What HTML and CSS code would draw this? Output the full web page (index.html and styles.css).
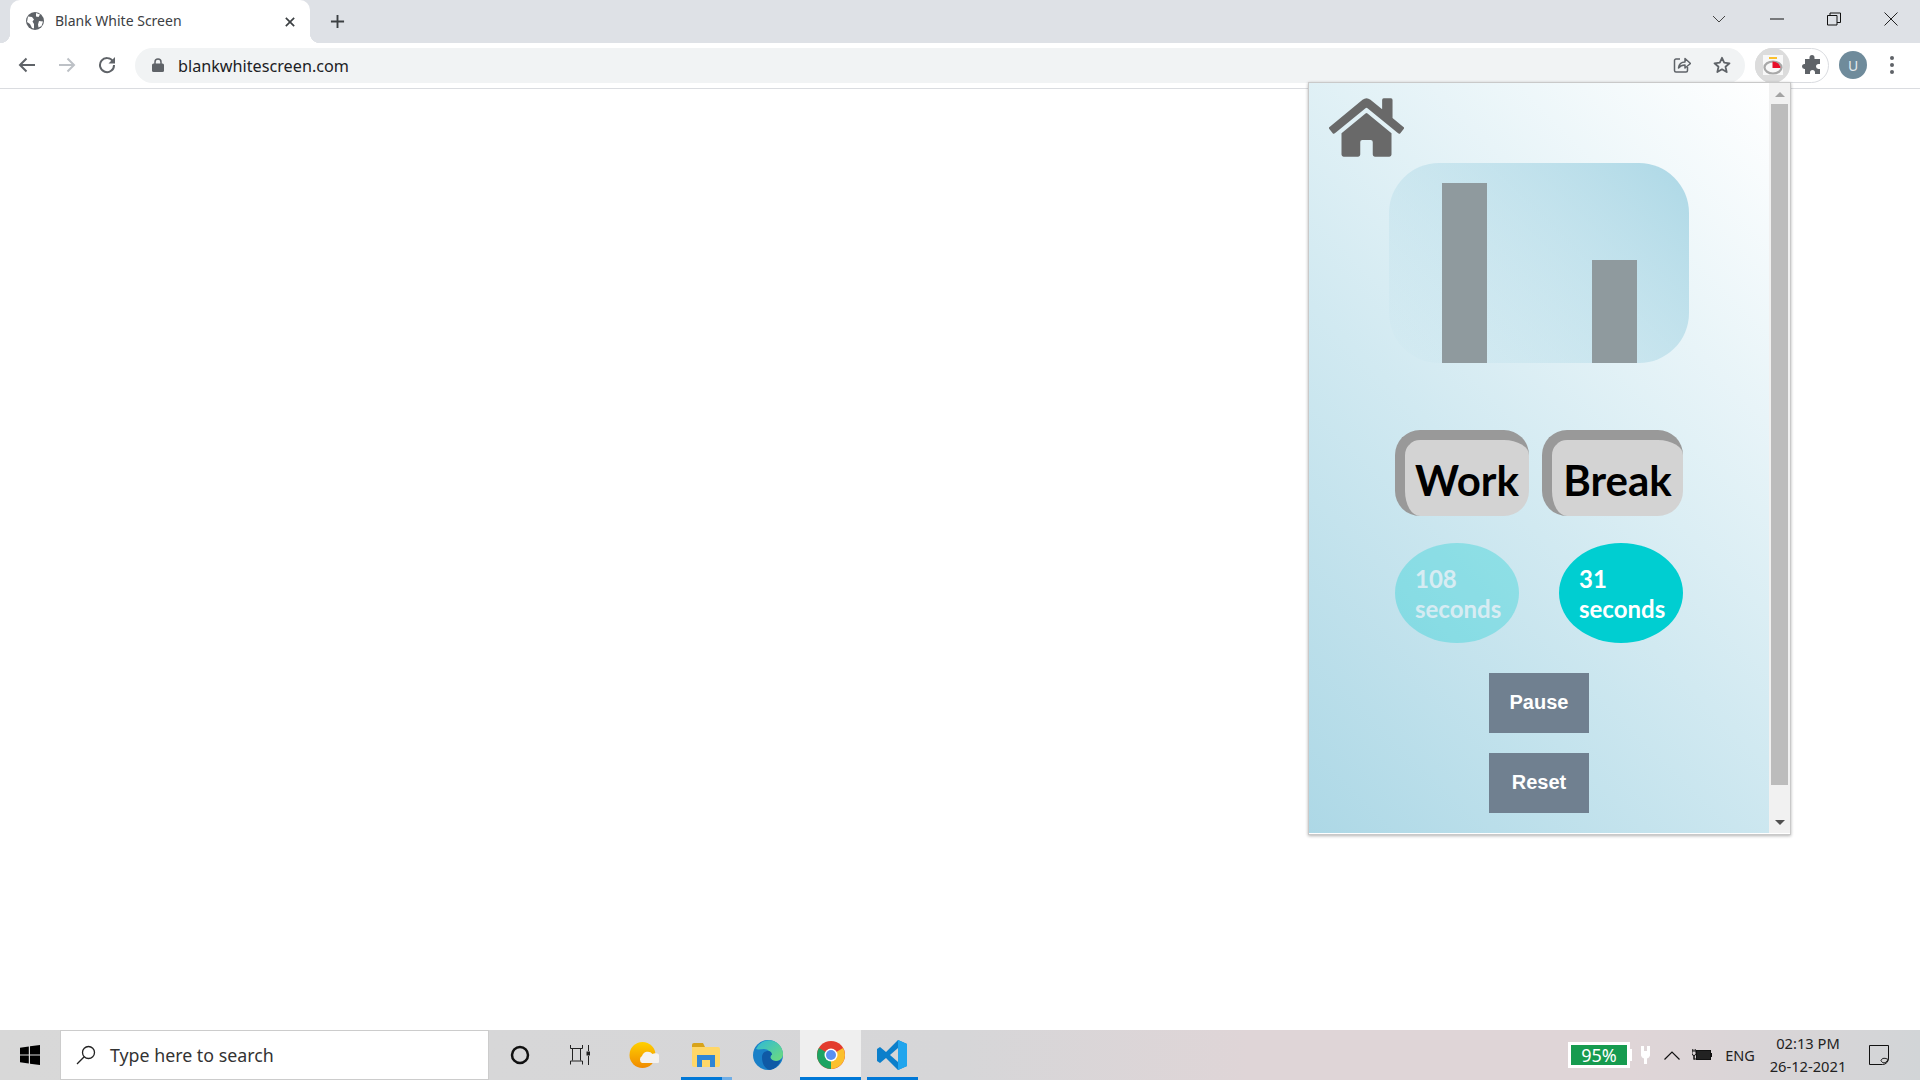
FILE: index.html
```html
<!DOCTYPE html>
<html>
<head>
    <title>Blank White Screen</title>
    <link rel="stylesheet" href="styles.css">
</head>
<body>
    <div class="tabstrip">
        <div class="tab">
            <svg class="favicon" viewBox="0 0 18 18"><circle cx="9" cy="9" r="9" fill="#5f6368"/><path d="M2 4.500 6 5l2 2.500-1.500 2L8 12v4.500L6 16l-2-4-3-2zM10 1l4 1.500L12.500 5 10 4.500zM13 9l4 .5-1.500 4.500-3 1.500-.5-3z" fill="#fff"/></svg>
            <span class="tab-title">Blank White Screen</span>
            <svg class="tab-close" viewBox="0 0 12 12"><path d="M1 1l10 10M11 1 1 11" stroke="#3c4043" stroke-width="2"/></svg>
        </div>
        <svg class="new-tab" viewBox="0 0 16 16"><path d="M8 1v14M1 8h14" stroke="#3c4043" stroke-width="2"/></svg>
        <div class="window-controls">
            <div class="win-btn chevron"><svg width="14" height="8" viewBox="0 0 14 8"><path d="M1 1l6 6 6-6" fill="none" stroke="#444" stroke-width="1"/></svg></div>
            <div class="win-btn"><svg width="14" height="2" viewBox="0 0 14 2"><path d="M0 1h14" stroke="#111" stroke-width="1"/></svg></div>
            <div class="win-btn"><svg width="14" height="14" viewBox="0 0 14 14"><path d="M.5 3.500h9.500v9.500H.5zM3 3.500V1h10.500v9.500H10" fill="none" stroke="#111" stroke-width="1"/></svg></div>
            <div class="win-btn"><svg width="14" height="14" viewBox="0 0 14 14"><path d="M.5.5l13 13M13.500.5l-13 13" stroke="#222" stroke-width="1"/></svg></div>
        </div>
    </div>

    <div class="toolbar">
        <div class="nav-btn"><svg width="18" height="16" viewBox="0 0 18 16"><path d="M17 8H2M8.500 1.500 2 8l6.500 6.500" fill="none" stroke="#5f6368" stroke-width="2"/></svg></div>
        <div class="nav-btn"><svg width="18" height="16" viewBox="0 0 18 16"><path d="M1 8h15M9.500 1.500 16 8l-6.500 6.500" fill="none" stroke="#bdc1c6" stroke-width="2"/></svg></div>
        <div class="nav-btn"><svg width="18" height="18" viewBox="0 0 18 18"><path d="M15 5.500A7 7 0 1 0 16 9" fill="none" stroke="#5f6368" stroke-width="2"/><path d="M17 1v6.500h-6.500z" fill="#5f6368"/></svg></div>
        <div class="omnibox">
            <svg class="lock" viewBox="0 0 12 14"><path d="M3 6V4a3 3 0 0 1 6 0v2" fill="none" stroke="#5f6368" stroke-width="1.500"/><rect y="5.500" width="12" height="8.500" rx="1.500" fill="#5f6368"/></svg>
            <span class="url">blankwhitescreen.com</span>
            <svg class="omni-icon share" viewBox="0 0 18 18"><path d="M7 3H3a1.500 1.500 0 0 0-1.500 1.500v10A1.500 1.500 0 0 0 3 16h10a1.500 1.500 0 0 0 1.500-1.500V11" fill="none" stroke="#5f6368" stroke-width="1.500"/><path d="M5.500 12c.5-4 3-6 6.500-6V2.500L17.500 7.500 12 12V9c-3 0-5 1-6.500 3z" fill="none" stroke="#5f6368" stroke-width="1.500" stroke-linejoin="round"/></svg>
            <svg class="omni-icon" viewBox="0 0 18 18"><path d="M9 1.800l2.200 4.900 5.300.6-4 3.500 1.200 5.300L9 13.300l-4.700 2.800 1.200-5.300-4-3.500 5.300-.6z" fill="none" stroke="#5f6368" stroke-width="1.800" stroke-linejoin="round"/></svg>
        </div>
        <div class="ext-pill">
            <div class="ext-active">
                <svg width="20" height="20" viewBox="0 0 20 20"><rect width="20" height="20" fill="#f8f8f8"/><rect x="6" y="2" width="8" height="2" fill="#fbc02d"/><ellipse cx="10" cy="12.500" rx="8.500" ry="6" fill="#f8f8f8" stroke="#a8a8a8" stroke-width="2.200"/><path d="M9.500 13V6.500a8 7 0 0 1 8 6.500z" fill="#e8102a"/></svg>
            </div>
            <svg class="puzzle" viewBox="0 0 20 20"><path d="M7.500 2.500a2.500 2.500 0 0 1 5 0V4H18v5h-1.500a2.500 2.500 0 0 0 0 5H18v5h-5v-1.500a2.500 2.500 0 0 0-5 0V19H3v-5h-.5a2.500 2.500 0 0 1 0-5H3V4h4.500z" fill="#5f6368"/></svg>
        </div>
        <div class="avatar">U</div>
        <div class="menu-dots"><span></span><span></span><span></span></div>
    </div>

    <div class="page">
        <div class="popup">
            <div class="popup-content">
                <svg class="home-icon" viewBox="0 32 576 448"><path d="M280.370 148.260L96 300.110V464a16 16 0 0 0 16 16l112.060-.29a16 16 0 0 0 15.920-16V368a16 16 0 0 1 16-16h64a16 16 0 0 1 16 16v95.640a16 16 0 0 0 16 16.050L464 480a16 16 0 0 0 16-16V300L295.670 148.260a12.190 12.190 0 0 0-15.300 0zM571.600 251.470L488 182.560V44.050a12 12 0 0 0-12-12h-56a12 12 0 0 0-12 12v72.610L318.470 43a48 48 0 0 0-61 0L4.340 251.470a12 12 0 0 0-1.600 16.900l25.500 31A12 12 0 0 0 45.150 301l235.220-193.740a12.190 12.190 0 0 1 15.300 0L530.900 301a12 12 0 0 0 16.900-1.600l25.500-31a12 12 0 0 0-1.700-16.930z"/></svg>
                <div class="chart">
                    <div class="bar" style="height: 180px"></div>
                    <div class="bar" style="height: 103px"></div>
                </div>
                <div class="modes">
                    <button class="mode mode-work">Work</button>
                    <button class="mode mode-break">Break</button>
                </div>
                <div class="timers">
                    <div class="timer timer-dim">108<br>seconds</div>
                    <div class="timer">31<br>seconds</div>
                </div>
                <button class="action">Pause</button>
                <button class="action">Reset</button>
            </div>
            <div class="scrollbar">
                <div class="arrow arrow-up"></div>
                <div class="thumb"></div>
                <div class="arrow arrow-down"></div>
            </div>
        </div>
    </div>

    <div class="taskbar">
        <div class="start">
            <svg width="20" height="20" viewBox="0 0 20 20"><path d="M0 2.800l8.800-1.300v8H0zM10 1.300 20 0v9.500H10zM0 10.500h8.800v8L0 17.200zM10 10.500h10V20l-10-1.300z" fill="#000"/></svg>
        </div>
        <div class="search">
            <svg width="20" height="20" viewBox="0 0 20 20"><circle cx="12.500" cy="7.500" r="6" fill="none" stroke="#222" stroke-width="1.300"/><path d="M8.200 11.800 1 19" stroke="#222" stroke-width="1.300"/></svg>
            <span class="search-text">Type here to search</span>
        </div>
        <div class="task-item">
            <svg width="20" height="20" viewBox="0 0 20 20"><circle cx="10" cy="10" r="8" fill="none" stroke="#111" stroke-width="2.500"/></svg>
        </div>
        <div class="task-item task-view">
            <svg width="20" height="20" viewBox="0 0 20 20"><path d="M.5 0v3.500h12V0M.5 19.500V16h12v3.500" fill="none" stroke="#222" stroke-width="1"/><path d="M2.500 3.500v12M10.500 3.500v12" stroke="#222" stroke-width="1"/><path d="M18.500 0v6M18.500 11v9" stroke="#222" stroke-width="1"/><rect x="16.500" y="6.500" width="4" height="4" fill="#222"/></svg>
        </div>
        <div class="task-item">
            <svg width="30" height="28" viewBox="0 0 30 28"><defs><linearGradient id="sun" x1="0" y1="0" x2="0" y2="1"><stop offset="0" stop-color="#ffd000"/><stop offset="1" stop-color="#f08a00"/></linearGradient></defs><circle cx="13.500" cy="14" r="13" fill="url(#sun)"/><path d="M13 22a4 4 0 0 1 0-7 6 6 0 0 1 10.500-2 5 5 0 0 1 5.500 9z" fill="#f4f2f0"/></svg>
        </div>
        <div class="task-item running">
            <svg width="28" height="24" viewBox="0 0 28 24"><path d="M0 2a2 2 0 0 1 2-2h9l2 4H0z" fill="#d8a31a"/><path d="M0 4h26a2 2 0 0 1 2 2v16a2 2 0 0 1-2 2H2a2 2 0 0 1-2-2z" fill="#ffd768"/><path d="M5 12h18v12h-5v-7h-8v7H5z" fill="#2f86d6"/></svg>
            <span class="underline underline-split"></span>
        </div>
        <div class="task-item">
            <svg width="30" height="30" viewBox="0 0 30 30"><defs><linearGradient id="edge1" x1="0" y1="0" x2="1" y2="1"><stop offset="0" stop-color="#2fb8d8"/><stop offset="1" stop-color="#6fdc7a"/></linearGradient></defs><circle cx="15" cy="15" r="15" fill="#1a80c8"/><path d="M3 9A14 14 0 0 1 30 14c0 4-3 7-7 7-4 0-6-1.500-6-3 0-1 1-1 1-3 0-3-3-6-7-6-3 0-6 1-8 0z" fill="url(#edge1)"/><path d="M9 17c0-4 3-6 6-6s4 2 4 4c-3 0-2 6 4 6 2 0 4-.5 5-1.500A15 15 0 0 1 17 30C12 29 9 24 9 17z" fill="#0f5aa6"/></svg>
        </div>
        <div class="task-item active running">
            <svg width="28" height="28" viewBox="0 0 28 28"><circle cx="14" cy="14" r="14" fill="#e33b2e"/><path d="M14 14 26.100 7A14 14 0 0 1 14 28z" fill="#fbc02d"/><path d="M14 14 14 28A14 14 0 0 1 1.900 7z" fill="#1da462"/><circle cx="14" cy="14" r="6.500" fill="#fff"/><circle cx="14" cy="14" r="5" fill="#5a8ff0"/></svg>
            <span class="underline underline-full"></span>
        </div>
        <div class="task-item running">
            <svg width="30" height="30" viewBox="0 0 30 30"><path d="M21 0 30 4v22l-9 4L9 18l-6 5-3-2v-12l3-2 6 5z" fill="#0b7fcb"/><path d="M21 0 30 4v22l-9 4z" fill="#21a5ed"/><path d="M21 8v14l-8-7z" fill="#d6d6d6"/></svg>
            <span class="underline underline-code"></span>
        </div>

        <div class="tray">
            <div class="battery-pill"><span class="battery-fill">95%</span></div>
            <div class="battery-nub"></div>
            <div class="tray-cell plug">
                <svg width="11" height="18" viewBox="0 0 11 18"><path d="M1 0h3v5h3V0h3v9.500A4 4 0 0 1 7 12.500V18H4v-5.500A4 4 0 0 1 1 9.500z" fill="#fff"/></svg>
            </div>
            <div class="tray-cell chevron-up">
                <svg width="16" height="9" viewBox="0 0 16 9"><path d="M.5 8.500 8 1l7.500 7.500" fill="none" stroke="#111" stroke-width="1.200"/></svg>
            </div>
            <div class="tray-cell battery">
                <svg width="20" height="12" viewBox="0 0 20 12"><path d="M0 2v2.500a2 2 0 0 0 4 0V2zM2 6v5" fill="none" stroke="#111"/><path d="M.8 0v2M3.200 0v2M2 7v3h3" fill="none" stroke="#111"/><rect x="4.500" y="1.500" width="14" height="9" fill="#222" stroke="#111"/><rect x="19" y="4" width="1" height="4" fill="#111"/></svg>
            </div>
            <div class="tray-cell lang">ENG</div>
            <div class="tray-cell clock"><span>02:13 PM</span><span>26-12-2021</span></div>
            <div class="tray-cell notif">
                <svg width="20" height="20" viewBox="0 0 20 20"><path d="M.5.500h19V13a6 6 0 0 1-6 6.500H.5z" fill="none" stroke="#111" stroke-width="1"/><path d="M12 15.500c1 3 5 3.500 7-1-2-1.500-6-2-7 1z" fill="#d6d6d6" stroke="#111" stroke-width="1"/></svg>
            </div>
        </div>
    </div>
</body>
</html>
```

FILE: styles.css
```css
* {
  box-sizing: border-box;
}

body {
  margin: 0;
  height: 100vh;
  display: flex;
  flex-direction: column;
  overflow: hidden;
  background-color: #fff;
  font-family: "Noto Sans", "Open Sans", sans-serif;
  color: #202124;
}

svg {
  display: block;
  flex-shrink: 0;
}

/* browser tabs */
.tabstrip {
  height: 43px;
  display: flex;
  align-items: center;
  background-color: #dee1e6;
}

.tab {
  position: relative;
  width: 300px;
  height: 43px;
  margin-left: 10px;
  padding: 0 14px 0 16px;
  display: flex;
  align-items: center;
  background-color: #fff;
  border-radius: 10px 10px 0 0;
}

.tab::before,
.tab::after {
  content: "";
  position: absolute;
  bottom: 0;
  width: 10px;
  height: 10px;
}

.tab::before {
  left: -10px;
  background: radial-gradient(circle at 0 0, transparent 10px, #fff 10.5px);
}

.tab::after {
  right: -10px;
  background: radial-gradient(circle at 100% 0, transparent 10px, #fff 10.5px);
}

.favicon {
  width: 18px;
  height: 18px;
  margin-top: -2px;
}

.tab-title {
  margin-left: 11px;
  margin-top: -2px;
  flex: 1;
  font-size: 14px;
  color: #3c4043;
}

.tab-close {
  width: 10px;
  height: 10px;
  margin-right: 1px;
}

.new-tab {
  width: 15px;
  height: 15px;
  margin-left: 20px;
}

.window-controls {
  margin-left: auto;
  padding-right: 1px;
  display: flex;
  align-items: center;
  margin-top: -6px;
}

.win-btn {
  width: 57px;
  display: flex;
  justify-content: center;
}

.win-btn.chevron {
  width: 40px;
  margin-right: 9px;
}

/* browser toolbar */
.toolbar {
  height: 46px;
  padding: 0 0 1px 7px;
  display: flex;
  align-items: center;
  background-color: #fff;
  border-bottom: 1px solid #dadce0;
}

.nav-btn {
  width: 40px;
  display: flex;
  justify-content: center;
}

.omnibox {
  flex: 1;
  height: 35px;
  margin-left: 8px;
  padding: 0 14px 0 17px;
  display: flex;
  align-items: center;
  background-color: #f1f3f4;
  border-radius: 18px;
}

.lock {
  width: 12px;
  height: 14px;
}

.url {
  flex: 1;
  margin-left: 14px;
  padding-top: 1px;
  font-size: 16.2px;
}

.omni-icon {
  width: 18px;
  height: 18px;
}

.share {
  margin-right: 22px;
}

.ext-pill {
  width: 74px;
  height: 35px;
  margin-left: 10px;
  display: flex;
  align-items: center;
  border: 1px solid #dadce0;
  border-radius: 18px;
}

.ext-active {
  width: 35px;
  height: 35px;
  margin-left: -1px;
  display: flex;
  justify-content: center;
  align-items: center;
  background-color: #dcdcdc;
  border-radius: 50%;
}

.puzzle {
  width: 20px;
  height: 20px;
  margin-left: 12px;
}

.avatar {
  width: 28px;
  height: 28px;
  margin-left: 10px;
  display: flex;
  justify-content: center;
  align-items: center;
  background-color: #6f8b9b;
  border-radius: 50%;
  color: #e4eaee;
  font-size: 14px;
}

.menu-dots {
  width: 4px;
  margin: 0 26px 0 23px;
  display: flex;
  flex-direction: column;
  gap: 3px;
}

.menu-dots span {
  width: 4px;
  height: 4px;
  background-color: #5f6368;
  border-radius: 50%;
}

/* page area and extension popup */
.page {
  flex: 1;
  position: relative;
}

.popup {
  position: absolute;
  top: -7px;
  left: 1308px;
  width: 483px;
  height: 753px;
  display: flex;
  background-color: #fff;
  border: 1px solid #c9c9c9;
  box-shadow: 0 1px 3px rgba(0, 0, 0, 0.3);
}

.popup-content {
  width: 460px;
  height: 750px;
  padding: 15px 0 0;
  display: flex;
  flex-direction: column;
  align-items: center;
  background: linear-gradient(45deg, #add8e6, #fff);
}

.home-icon {
  width: 75px;
  height: 59px;
  margin-right: 345px;
  fill: #696969;
}

.chart {
  width: 300px;
  height: 200px;
  margin-top: 6px;
  padding-left: 53px;
  display: flex;
  align-items: flex-end;
  gap: 105px;
  background: linear-gradient(225deg, #add8e6, rgba(173, 216, 230, 0));
  border-radius: 50px;
}

.bar {
  width: 45px;
  background-color: #8f9a9e;
}

.modes {
  margin-top: 67px;
  display: flex;
  gap: 13px;
}

.mode {
  height: 86px;
  padding: 4px 0 0;
  background-color: #d3d3d3;
  border: solid #999;
  border-width: 10px 0 0 10px;
  border-radius: 25px;
  font-family: "Lato", "Noto Sans", sans-serif;
  font-size: 42px;
  font-weight: 700;
  color: #000;
  text-align: center;
}

.mode-work {
  width: 134px;
}

.mode-break {
  width: 141px;
}

.timers {
  width: 288px;
  margin-top: 27px;
  margin-bottom: 30px;
  display: flex;
  justify-content: space-between;
}

.timer {
  width: 124px;
  height: 100px;
  padding: 21px 0 0 20px;
  background-color: #00ced1;
  border-radius: 50%;
  color: #fff;
  font-family: "Lato", "Noto Sans", sans-serif;
  font-size: 24px;
  font-weight: 700;
  line-height: 30px;
  white-space: nowrap;
}

.timer-dim {
  opacity: 0.3;
}

.action {
  width: 100px;
  height: 60px;
  flex-shrink: 0;
  margin-bottom: 20px;
  padding: 0 0 2px;
  background-color: #708090;
  border: none;
  color: #fff;
  font-family: "Liberation Sans", sans-serif;
  font-size: 20px;
  font-weight: 700;
}

.scrollbar {
  width: 21px;
  height: 750px;
  padding: 0 2px;
  display: flex;
  flex-direction: column;
  background-color: #f1f1f1;
}

.thumb {
  height: 681px;
  background-color: #bcbcbc;
}

.arrow {
  display: flex;
  justify-content: center;
  align-items: center;
}

.arrow::after {
  content: "";
  border-left: 5px solid transparent;
  border-right: 5px solid transparent;
}

.arrow-up {
  height: 21px;
  padding-top: 2px;
}

.arrow-up::after {
  border-bottom: 5px solid #a3a3a3;
}

.arrow-down {
  height: 48px;
  padding-top: 26px;
}

.arrow-down::after {
  border-top: 5px solid #505050;
}

/* windows taskbar */
.taskbar {
  height: 50px;
  display: flex;
  align-items: center;
  background: linear-gradient(to right, #d8d8d8 0%, #d6d6d8 50%, #dfd5d7 65%, #dfd5d7 85%, #d2d5d7 100%);
}

.start {
  width: 60px;
  display: flex;
  justify-content: center;
}

.search {
  width: 429px;
  height: 50px;
  padding-left: 15px;
  display: flex;
  align-items: center;
  background-color: #fff;
  border: 1px solid #ccc;
}

.search-text {
  margin-left: 14px;
  font-size: 17.8px;
  color: #333;
}

.task-item {
  position: relative;
  width: 62px;
  height: 50px;
  display: flex;
  justify-content: center;
  align-items: center;
}

.task-item.active {
  width: 61px;
  margin-left: 1px;
  background-color: #efefef;
}

.task-view svg {
  margin-right: 4px;
}

.underline {
  position: absolute;
  bottom: 0;
  height: 3px;
  background-color: #0078d7;
}

.underline-split {
  left: 6px;
  width: 51px;
  background: linear-gradient(to right, #0078d7 80%, #70aee6 80%);
}

.underline-full {
  left: 0;
  width: 61px;
}

.underline-code {
  left: 6px;
  width: 51px;
}

.tray {
  margin-left: auto;
  padding-right: 18px;
  display: flex;
  align-items: center;
  font-size: 14px;
  color: #222;
}

.battery-pill {
  width: 62px;
  height: 26px;
  padding: 3px;
  background-color: #fff;
}

.battery-nub {
  width: 2px;
  height: 12px;
  background-color: #fff;
}

.battery-fill {
  height: 20px;
  display: flex;
  justify-content: center;
  align-items: center;
  background-color: #169b4f;
  color: #fff;
  font-size: 18px;
}

.tray-cell {
  display: flex;
  justify-content: center;
  align-items: center;
}

.plug {
  width: 26px;
}

.chevron-up {
  width: 28px;
}

.battery {
  width: 32px;
}

.lang {
  width: 44px;
  font-size: 14.5px;
}

.clock {
  width: 92px;
  flex-direction: column;
  font-size: 14.7px;
  line-height: 23px;
}

.notif {
  width: 48px;
  padding-left: 2px;
}
```
